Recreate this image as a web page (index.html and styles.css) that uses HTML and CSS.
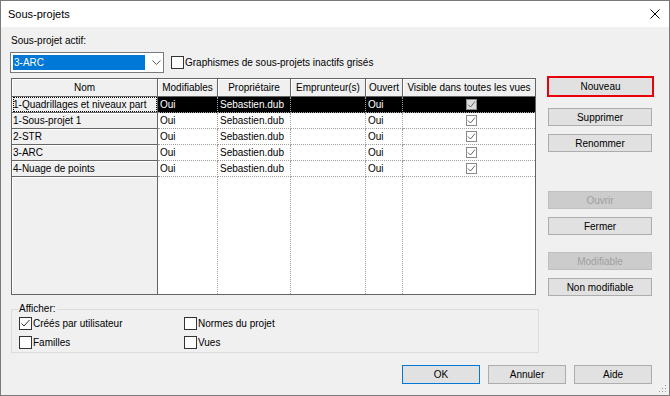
FILE: index.html
```html
<!DOCTYPE html>
<html lang="fr">
<head>
    <meta charset="UTF-8">
    <title>Sous-projets</title>
    <link rel="stylesheet" href="styles.css">
</head>
<body>
    <div class="dialog">
        <div class="titlebar">
            <div class="title">Sous-projets</div>
            <svg class="close" width="10" height="10" viewBox="0 0 10 10">
                <path d="M0.5 0.5 L9.5 9.5 M9.5 0.5 L0.5 9.5" stroke="#000" stroke-width="1"/>
            </svg>
        </div>

        <div class="content">
            <div class="label">Sous-projet actif:</div>
            <div class="top-row">
                <div class="combo">
                    <div class="combo-value">3-ARC</div>
                    <svg class="chevron" width="9" height="5" viewBox="0 0 9 5">
                        <path d="M0.5 0.5 L4.5 4.5 L8.5 0.5" stroke="#555" fill="none"/>
                    </svg>
                </div>
                <label class="check">
                    <span class="box"></span>Graphismes de sous-projets inactifs grisés
                </label>
            </div>

            <div class="main">
                <div class="grid">
                    <div class="head">Nom</div>
                    <div class="head">Modifiables</div>
                    <div class="head">Propriétaire</div>
                    <div class="head">Emprunteur(s)</div>
                    <div class="head">Ouvert</div>
                    <div class="head last">Visible dans toutes les vues</div>

                    <div class="name"><span class="focus">1-Quadrillages et niveaux part</span></div>
                    <div class="cell sel">Oui</div>
                    <div class="cell sel">Sebastien.dub</div>
                    <div class="cell sel"></div>
                    <div class="cell sel">Oui</div>
                    <div class="cell sel last center"><span class="mini"></span></div>

                    <div class="name">1-Sous-projet 1</div>
                    <div class="cell">Oui</div>
                    <div class="cell">Sebastien.dub</div>
                    <div class="cell"></div>
                    <div class="cell">Oui</div>
                    <div class="cell last center"><span class="mini"></span></div>

                    <div class="name">2-STR</div>
                    <div class="cell">Oui</div>
                    <div class="cell">Sebastien.dub</div>
                    <div class="cell"></div>
                    <div class="cell">Oui</div>
                    <div class="cell last center"><span class="mini"></span></div>

                    <div class="name">3-ARC</div>
                    <div class="cell">Oui</div>
                    <div class="cell">Sebastien.dub</div>
                    <div class="cell"></div>
                    <div class="cell">Oui</div>
                    <div class="cell last center"><span class="mini"></span></div>

                    <div class="name">4-Nuage de points</div>
                    <div class="cell">Oui</div>
                    <div class="cell">Sebastien.dub</div>
                    <div class="cell"></div>
                    <div class="cell">Oui</div>
                    <div class="cell last center"><span class="mini"></span></div>

                    <div class="name filler"></div>
                    <div class="cell filler"></div>
                    <div class="cell filler"></div>
                    <div class="cell filler"></div>
                    <div class="cell filler"></div>
                    <div class="cell filler last"></div>
                </div>

                <div class="side">
                    <button class="btn nouveau">Nouveau</button>
                    <button class="btn">Supprimer</button>
                    <button class="btn">Renommer</button>
                    <button class="btn disabled gap-big">Ouvrir</button>
                    <button class="btn">Fermer</button>
                    <button class="btn disabled gap-mid">Modifiable</button>
                    <button class="btn">Non modifiable</button>
                </div>
            </div>

            <fieldset class="group">
                <legend>Afficher:</legend>
                <div class="group-grid">
                    <label class="check"><span class="box checked"></span>Créés par utilisateur</label>
                    <label class="check"><span class="box"></span>Normes du projet</label>
                    <label class="check"><span class="box"></span>Familles</label>
                    <label class="check"><span class="box"></span>Vues</label>
                </div>
            </fieldset>

            <div class="footer">
                <button class="btn wide default">OK</button>
                <button class="btn wide">Annuler</button>
                <button class="btn wide">Aide</button>
            </div>
        </div>

        <svg class="grip" width="8" height="8" viewBox="0 0 8 8">
            <rect x="6" y="0" width="1" height="1" fill="#999"/>
            <rect x="3" y="3" width="1" height="1" fill="#999"/>
            <rect x="6" y="3" width="1" height="1" fill="#999"/>
            <rect x="0" y="6" width="1" height="1" fill="#999"/>
            <rect x="3" y="6" width="1" height="1" fill="#999"/>
            <rect x="6" y="6" width="1" height="1" fill="#999"/>
        </svg>
    </div>
</body>
</html>
```

FILE: styles.css
```css
*{
    box-sizing: border-box;
}
body{
    margin: 0;
    font-family: "Liberation Sans", Arial, sans-serif;
    font-size: 10px;
    color: #000;
}
.dialog{
    position: relative;
    width: 670px;
    height: 396px;
    border: 1px solid #7a7a7a;
    background-color: #f0f0f0;
    display: flex;
    flex-direction: column;
}
.titlebar{
    height: 26px;
    background-color: #fff;
    display: flex;
    align-items: center;
    justify-content: space-between;
    padding: 0 9px 0 7px;
}
.title{
    font-size: 11px;
}
.content{
    padding: 0 17px 0 9px;
}
.label{
    margin-top: 7px;
    height: 14px;
    line-height: 14px;
    padding-left: 1px;
}
.top-row{
    margin-top: 4px;
    display: flex;
    align-items: center;
    height: 21px;
}
.combo{
    width: 154px;
    height: 21px;
    border: 1px solid #7a7a7a;
    background-color: #fff;
    display: flex;
    align-items: center;
    padding: 2px;
}
.combo-value{
    width: 134px;
    height: 15px;
    line-height: 15px;
    background-color: #0078d7;
    color: #fff;
    padding-left: 1px;
}
.chevron{
    margin-left: 7px;
}
.check{
    display: flex;
    align-items: center;
    height: 14px;
}
.top-row .check{
    margin-left: 7px;
}
.box{
    width: 13px;
    height: 13px;
    border: 1px solid #333;
    background-color: #fff;
    margin-right: 1px;
    flex: none;
}
.box.checked{
    background-image: url("data:image/svg+xml;utf8,<svg xmlns='http://www.w3.org/2000/svg' width='11' height='11'><path d='M1.5 5.5 L4 8 L9.5 2' stroke='%23333' fill='none'/></svg>");
}
.main{
    margin-top: 5px;
    display: flex;
    align-items: flex-start;
}
.grid{
    margin-left: 1px;
    width: 525px;
    height: 217px;
    border: 1px solid #646464;
    background-color: #fff;
    display: grid;
    grid-template-columns: 146px 60px 73px 75px 37px 132px;
    grid-template-rows: 18px repeat(5, 16px) 1fr;
}
.head, .name{
    background-color: #f0f0f0;
    border-right: 1px solid #646464;
    border-bottom: 1px solid #646464;
    box-shadow: inset 1px 1px 0 #fff;
    white-space: nowrap;
    overflow: hidden;
}
.head{
    text-align: center;
    line-height: 17px;
}
.name{
    line-height: 15px;
    padding-left: 1px;
}
.focus{
    display: block;
    outline: 1px dotted #000;
    outline-offset: -1px;
    height: 15px;
}
.cell{
    border-right: 1px dotted #a0a0a0;
    border-bottom: 1px dotted #a0a0a0;
    line-height: 15px;
    padding-left: 2px;
    white-space: nowrap;
    overflow: hidden;
}
.last{
    border-right: none;
}
.center{
    display: flex;
    align-items: center;
    justify-content: center;
}
.sel{
    background-color: #000;
    color: #fff;
}
.filler{
    border-bottom: none;
}
.mini{
    width: 11px;
    height: 11px;
    border: 1px solid #8a8a8a;
    background-color: #fff;
    margin-left: 2px;
    background-image: url("data:image/svg+xml;utf8,<svg xmlns='http://www.w3.org/2000/svg' width='9' height='9'><path d='M1 4.5 L3.5 7 L8 1.5' stroke='%23666' fill='none'/></svg>");
}
.sel .mini{
    background-color: #ddd;
}
.side{
    margin-left: 12px;
    margin-top: -2px;
    display: flex;
    flex-direction: column;
}
.btn{
    width: 104px;
    height: 18px;
    margin: 8px 0 0 0;
    padding: 0;
    border: 1px solid #adadad;
    background-color: #e1e1e1;
    font-family: "Liberation Sans", Arial, sans-serif;
    font-size: 10px;
    color: #000;
}
.btn.nouveau{
    margin: 0 0 3px -1px;
    width: 107px;
    height: 21px;
    border: 2px solid #e8000b;
}
.btn.disabled{
    color: #a0a0a0;
    background-color: #cccccc;
    border-color: #bfbfbf;
}
.gap-big{
    margin-top: 39px;
}
.btn.gap-mid{
    margin-top: 17px;
}
.group{
    margin: 7px 0 0 1px;
    width: 528px;
    height: 50px;
    border: 1px solid #dcdcdc;
    padding: 0 0 0 7px;
}
.group legend{
    padding: 0 1px;
    margin-left: -1px;
    line-height: 12px;
}
.group-grid{
    display: grid;
    grid-template-columns: 165px 160px;
    row-gap: 5px;
    margin-top: 1px;
}
.footer{
    margin-top: 12px;
    display: flex;
    justify-content: flex-end;
    gap: 8px;
}
.btn.wide{
    width: 78px;
    height: 19px;
    margin: 0;
}
.btn.default{
    border-color: #0078d7;
}
.grip{
    position: absolute;
    right: 2px;
    bottom: 2px;
}
```
